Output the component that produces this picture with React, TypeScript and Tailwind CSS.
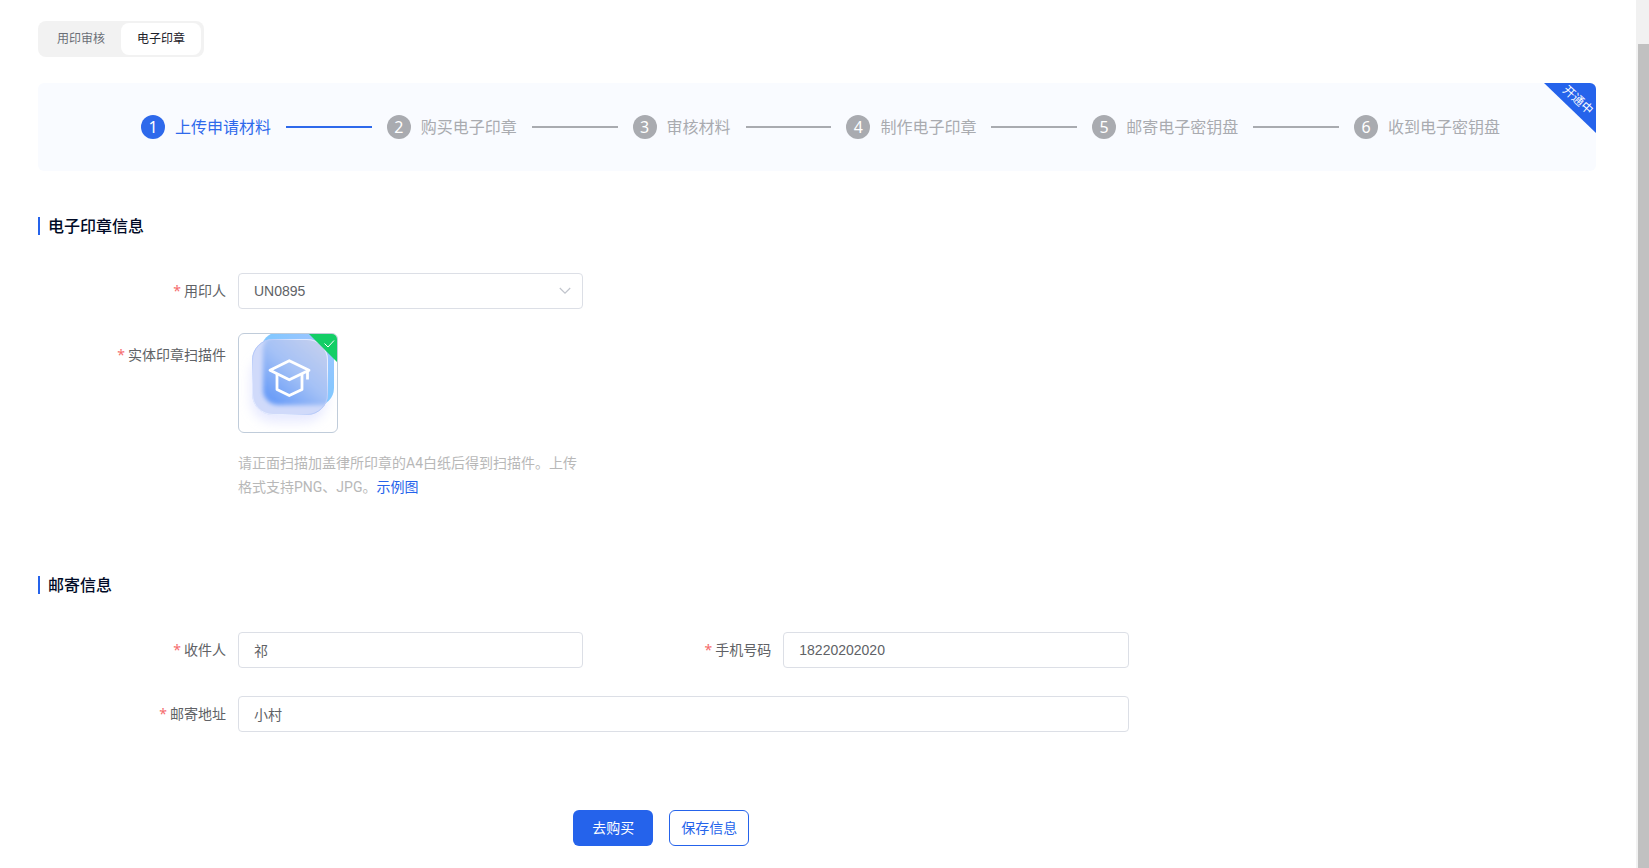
import type { ReactNode } from 'react'
import { useState } from 'react'

const STEPS = ['上传申请材料', '购买电子印章', '审核材料', '制作电子印章', '邮寄电子密钥盘', '收到电子密钥盘']

const CONTROL =
  'h-9 w-full rounded border border-[#dcdfe6] bg-white px-[15px] text-sm text-[#606266] outline-none focus:border-[#2563eb] font-["Liberation_Sans","Noto_Sans_CJK_SC",sans-serif]'

function Tabs() {
  const [active, setActive] = useState('电子印章')
  return (
    <div role="tablist" className="flex w-fit rounded-lg bg-[#f2f2f2] px-[3px] py-[2px]">
      {['用印审核', '电子印章'].map((tab) => (
        <button
          key={tab}
          type="button"
          role="tab"
          aria-selected={tab === active}
          onClick={() => setActive(tab)}
          className={
            tab === active
              ? 'h-8 rounded-lg bg-white px-4 text-xs text-[#1d2129]'
              : 'h-8 rounded-lg px-4 text-xs text-[#6b6f77]'
          }
        >
          {tab}
        </button>
      ))}
    </div>
  )
}

function Steps() {
  return (
    <div className="relative mt-[26px] rounded-md bg-[#f9fbff]">
      <ol className="flex h-[88px] items-center pr-24 pl-[103px]">
        {STEPS.map((label, i) => (
          <li
            key={label}
            className={`flex items-center ${i < STEPS.length - 1 ? 'grow' : ''} ${
              i === 0 ? 'text-[#2e69eb]' : 'text-[#a9abb0]'
            }`}
          >
            <span
              className={`flex size-6 shrink-0 items-center justify-center rounded-full text-base leading-6 text-white ${
                i === 0 ? 'bg-[#2e69eb]' : 'bg-[#a9abb0]'
              }`}
            >
              {i + 1}
            </span>
            <span className="ml-2.5 text-base leading-6 whitespace-nowrap">{label}</span>
            {i < STEPS.length - 1 && <span className="mx-[15px] h-[2px] grow bg-current" />}
          </li>
        ))}
      </ol>
      <div className="absolute top-0 right-0 h-[50px] w-[52px]">
        <div className="size-full rounded-tr-md bg-[#2563eb] [clip-path:polygon(0_0,100%_0,100%_100%)]" />
        <span className="absolute top-2 right-0 rotate-[42deg] text-xs leading-[18px] whitespace-nowrap text-white">
          开通中
        </span>
      </div>
    </div>
  )
}

function SectionTitle({ children }: { children: ReactNode }) {
  return (
    <h2 className="flex h-[18px] items-center border-l-2 border-[#2563eb] pl-2 text-base font-medium text-[#000a26]">
      {children}
    </h2>
  )
}

function Label({ htmlFor, tall, children }: { htmlFor: string; tall?: boolean; children: ReactNode }) {
  return (
    <label
      htmlFor={htmlFor}
      className={`w-[200px] shrink-0 pr-3 text-right text-sm text-[#606266] ${tall ? 'leading-[44px]' : 'leading-9'}`}
    >
      <span className="mr-[3px] text-[#f56c6c]">*</span>
      {children}
    </label>
  )
}

function SealImage() {
  return (
    <svg viewBox="0 0 98 98" className="size-full" role="img" aria-label="实体印章扫描件">
      <defs>
        <linearGradient id="back" x1="0" y1="0" x2="1" y2="1">
          <stop offset="0" stopColor="#7cc8ff" />
          <stop offset=".5" stopColor="#a3c4ff" />
          <stop offset="1" stopColor="#7cc8ff" />
        </linearGradient>
        <linearGradient id="inner" x1="0.1" y1="0.9" x2="0.85" y2="0.1">
          <stop offset="0" stopColor="#6a9df8" />
          <stop offset=".45" stopColor="#a4c1f6" />
          <stop offset="1" stopColor="#c8d1ee" />
        </linearGradient>
        <linearGradient id="rim" x1="0" y1="0" x2="1" y2="1">
          <stop offset="0" stopColor="#9fb9f5" />
          <stop offset=".3" stopColor="#dfe7ff" />
          <stop offset=".7" stopColor="#e9efff" />
          <stop offset="1" stopColor="#9fb9f5" />
        </linearGradient>
        <filter id="shadow" x="-30%" y="-30%" width="160%" height="160%">
          <feGaussianBlur stdDeviation="6" />
        </filter>
        <filter id="soft" x="-20%" y="-20%" width="140%" height="140%">
          <feGaussianBlur stdDeviation="2" />
        </filter>
        <clipPath id="glass">
          <rect x="13" y="5" width="76" height="76" rx="21" />
        </clipPath>
      </defs>
      <rect x="12" y="20" width="76" height="68" rx="22" fill="#d3d8ff" opacity=".55" filter="url(#shadow)" />
      <rect x="22" y="-2" width="73" height="74" rx="18" fill="url(#back)" />
      <rect x="13" y="5" width="76" height="76" rx="21" fill="#d0dafa" />
      <g clipPath="url(#glass)">
        <rect x="24" y="0" width="76" height="71" rx="15" fill="url(#inner)" filter="url(#soft)" />
      </g>
      <rect x="13.5" y="5.5" width="75" height="75" rx="20.5" fill="none" stroke="url(#rim)" />
      <g fill="none" stroke="#fff" strokeWidth="2.8" strokeLinejoin="round" strokeLinecap="round">
        <path d="M31 36.3 50.3 26.7 70 36.3 50.3 45.8z" />
        <path d="M38 40.5V55.5L50.3 61.5 63 55.5V40.5" />
        <path d="M68.5 37V45.5" strokeLinecap="butt" />
      </g>
      <path d="M70 0H98V28z" fill="#13ce66" />
      <path d="M85.5 9.5 89 13 95 6.5" fill="none" stroke="#fff" strokeWidth="1" />
    </svg>
  )
}

export default function App() {
  return (
    <div className="flex min-h-screen bg-white font-['Noto_Sans','Noto_Sans_CJK_SC',sans-serif]">
      <main className="min-w-0 grow pt-[21px] pr-10 pb-[22px] pl-[38px]">
        <Tabs />
        <Steps />

        <form onSubmit={(e) => e.preventDefault()}>
          <section className="mt-[46px]">
            <SectionTitle>电子印章信息</SectionTitle>
            <div className="mt-[38px] flex w-[35%] flex-col gap-6">
              <div className="flex">
                <Label htmlFor="signer">用印人</Label>
                <div className="relative min-w-0 grow">
                  <select id="signer" className={`${CONTROL} appearance-none`}>
                    <option>UN0895</option>
                  </select>
                  <svg
                    viewBox="0 0 12 8"
                    className="pointer-events-none absolute top-3.5 right-3 h-2 w-3"
                    fill="none"
                    stroke="#c0c4cc"
                    strokeWidth="1.2"
                  >
                    <path d="M.8 1 6 6.2 11.2 1" />
                  </svg>
                </div>
              </div>
              <div className="flex">
                <Label htmlFor="scan" tall>
                  实体印章扫描件
                </Label>
                <div className="min-w-0 grow">
                  <button
                    id="scan"
                    type="button"
                    className="block size-[100px] overflow-hidden rounded-md border border-[#c0ccda] bg-white"
                  >
                    <SealImage />
                  </button>
                  <p className="mt-[18px] font-['Roboto','Noto_Sans_CJK_SC',sans-serif] text-sm leading-6 text-[#b8b8b8]">
                    请正面扫描加盖律所印章的A4白纸后得到扫描件。上传格式支持PNG、JPG。
                    <a href="#example" className="text-[#2563eb]">
                      示例图
                    </a>
                  </p>
                </div>
              </div>
            </div>
          </section>

          <section className="mt-[77px]">
            <SectionTitle>邮寄信息</SectionTitle>
            <div className="mt-[38px] grid w-[70%] grid-cols-2 gap-y-7">
              <div className="flex">
                <Label htmlFor="recipient">收件人</Label>
                <input id="recipient" type="text" defaultValue="祁" className={CONTROL} />
              </div>
              <div className="flex">
                <Label htmlFor="phone">手机号码</Label>
                <input id="phone" type="tel" defaultValue="18220202020" className={CONTROL} />
              </div>
              <div className="col-span-2 flex">
                <Label htmlFor="address">邮寄地址</Label>
                <input id="address" type="text" defaultValue="小村" className={CONTROL} />
              </div>
            </div>
          </section>

          <div className="mt-[78px] flex w-4/5 justify-center gap-4">
            <button type="submit" className="h-9 w-20 rounded-md bg-[#2563eb] text-sm text-white">
              去购买
            </button>
            <button
              type="button"
              className="h-9 w-20 rounded-md border border-[#2563eb] bg-white text-sm text-[#2563eb]"
            >
              保存信息
            </button>
          </div>
        </form>
      </main>
      <div aria-hidden="true" className="w-[13px] shrink-0 bg-[#f1f1f1] pt-11 pl-[2px]">
        <div className="h-full bg-[#c1c1c1]" />
      </div>
    </div>
  )
}
